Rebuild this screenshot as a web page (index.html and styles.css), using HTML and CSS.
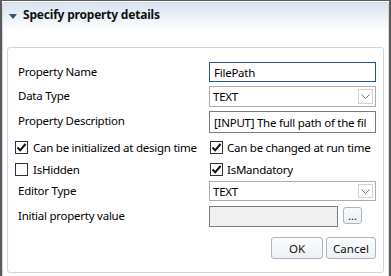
FILE: index.html
```html
<!DOCTYPE html>
<html>
<head>
<meta charset="utf-8">
<link rel="stylesheet" href="styles.css">
</head>
<body>
<div class="window">
  <div class="section">
    <div class="header">
      <svg class="arrow" width="8" height="5" viewBox="0 0 8 5"><path d="M0 0 H8 L4 5 Z" fill="#2c4f78"/></svg>
      <span class="title">Specify property details</span>
    </div>
    <div class="panel">
      <div class="row r1">
        <span class="label">Property Name</span>
        <div class="input focus">FilePath</div>
      </div>
      <div class="row r2">
        <span class="label">Data Type</span>
        <div class="select">TEXT<span class="drop"><svg width="9" height="5" viewBox="0 0 9 5"><path d="M0.5 0.5 L4.5 4.5 L8.5 0.5" fill="none" stroke="#7a7a7a" stroke-width="1"/></svg></span></div>
      </div>
      <div class="row r3">
        <span class="label">Property Description</span>
        <div class="input desc">[INPUT] The full path of the fil</div>
      </div>
      <div class="row r4">
        <label class="check left"><span class="box on"><svg width="11" height="11" viewBox="0 0 11 11"><path d="M1.5 5.5 L4.2 8.3 L9.5 2" fill="none" stroke="#111" stroke-width="2"/></svg></span>Can be initialized at design time</label>
        <label class="check right"><span class="box on"><svg width="11" height="11" viewBox="0 0 11 11"><path d="M1.5 5.5 L4.2 8.3 L9.5 2" fill="none" stroke="#111" stroke-width="2"/></svg></span>Can be changed at run time</label>
      </div>
      <div class="row r5">
        <label class="check left"><span class="box"></span>IsHidden</label>
        <label class="check right"><span class="box on"><svg width="11" height="11" viewBox="0 0 11 11"><path d="M1.5 5.5 L4.2 8.3 L9.5 2" fill="none" stroke="#111" stroke-width="2"/></svg></span>IsMandatory</label>
      </div>
      <div class="row r6">
        <span class="label">Editor Type</span>
        <div class="select">TEXT<span class="drop"><svg width="9" height="5" viewBox="0 0 9 5"><path d="M0.5 0.5 L4.5 4.5 L8.5 0.5" fill="none" stroke="#7a7a7a" stroke-width="1"/></svg></span></div>
      </div>
      <div class="row r7">
        <span class="label">Initial property value</span>
        <div class="ctrl-pair">
          <div class="input disabled"></div>
          <button class="dots">...</button>
        </div>
      </div>
      <div class="row r8">
        <button class="btn ok">OK</button>
        <button class="btn cancel">Cancel</button>
      </div>
    </div>
  </div>
</div>
</body>
</html>
```

FILE: styles.css
```css
html, body {
  margin: 0;
  padding: 0;
  background: #ffffff;
}
body {
  font-family: "Noto Sans", "Open Sans", sans-serif;
  font-size: 11.5px;
  letter-spacing: -0.25px;
  color: #000;
}
.window {
  width: 391px;
  height: 276px;
  box-sizing: border-box;
  border-top: 1px solid #5b5b5b;
  border-left: 2px solid #5b5b5b;
  border-right: 2px solid #5b5b5b;
  padding-top: 1px;
  background: #fff;
}
.section {
  width: 387px;
  height: 274px;
  box-sizing: border-box;
  border: 1px solid #cfd9e4;
  border-bottom: none;
  border-radius: 3px 3px 0 0;
  background: linear-gradient(to bottom, #dae3ef 0px, #f1f5fa 18px, #ffffff 28px);
}
.header {
  height: 44px;
  display: flex;
  align-items: flex-start;
  padding-top: 3px;
  box-sizing: border-box;
}
.arrow {
  margin: 8px 0 0 6px;
}
.title {
  font-weight: bold;
  font-size: 12px;
  color: #111;
  margin-left: 6px;
  line-height: 18px;
  letter-spacing: -0.2px;
}
.panel {
  margin-left: 4px;
  width: 377px;
  height: 226px;
  box-sizing: border-box;
  border: 1px solid #ccd5df;
  border-radius: 3px;
  padding-top: 14px;
  background: #fff;
}
.row {
  display: flex;
  align-items: flex-start;
}
.label {
  width: 191px;
  padding-left: 10px;
  flex: none;
  line-height: 18px;
  margin-top: 1px;
}
.r1 { height: 24px; }
.r2 { height: 25px; }
.r3 { height: 26px; }
.r4 { height: 21px; align-items: center; }
.r5 { height: 23px; align-items: center; }
.r6 { height: 25px; }
.r7 { height: 31px; }
.r8 { height: 21px; justify-content: flex-end; padding-right: 7px; gap: 3px; }

.r1 .input { height: 20px; }
.r2 .select { height: 21px; }
.r3 .input { height: 22px; }
.r6 .select { height: 20px; }

.input, .select {
  width: 167px;
  box-sizing: border-box;
  border: 1px solid #7a7a7a;
  padding: 0 4px;
  display: flex;
  align-items: center;
  white-space: nowrap;
  overflow: hidden;
  background: #fff;
}
.input.focus {
  border-color: #1f5a8c;
}
.select {
  border-color: #acacac;
  position: relative;
  padding-left: 3px;
}
.drop {
  position: absolute;
  right: 2px;
  top: 2px;
  bottom: 2px;
  width: 15px;
  box-sizing: border-box;
  border: 1px solid #d3d3d3;
  display: flex;
  align-items: center;
  justify-content: center;
}
.ctrl-pair {
  display: flex;
  align-items: flex-start;
  gap: 5px;
}
.input.disabled {
  width: 129px;
  height: 21px;
  background: #f0f0f0;
  border-color: #7e7e7e;
}
.dots {
  width: 19px;
  height: 17px;
  margin-top: 1px;
  padding: 0;
  border: 1px solid #a6b3c3;
  border-radius: 3px;
  background: linear-gradient(#fafbfc, #eceff3);
  font-family: inherit;
  font-size: 11px;
  line-height: 10px;
  color: #111;
}
.check {
  display: flex;
  align-items: center;
  white-space: nowrap;
  line-height: 16px;
}
.check.left {
  width: 195px;
  padding-left: 7px;
  flex: none;
}
.box {
  width: 13px;
  height: 13px;
  box-sizing: border-box;
  border: 1px solid #333;
  background: #fff;
  display: flex;
  align-items: center;
  justify-content: center;
  margin-right: 4px;
  flex: none;
}
.check.left .box { margin-right: 5px; }
.btn {
  height: 22px;
  box-sizing: border-box;
  border: 1px solid #adb5c0;
  border-radius: 3px;
  background: linear-gradient(#fbfcfd, #eef1f5);
  font-family: inherit;
  font-size: 11.5px;
  letter-spacing: 0;
  color: #111;
  padding: 0;
}
.ok { width: 52px; }
.cancel { width: 50px; }
```
